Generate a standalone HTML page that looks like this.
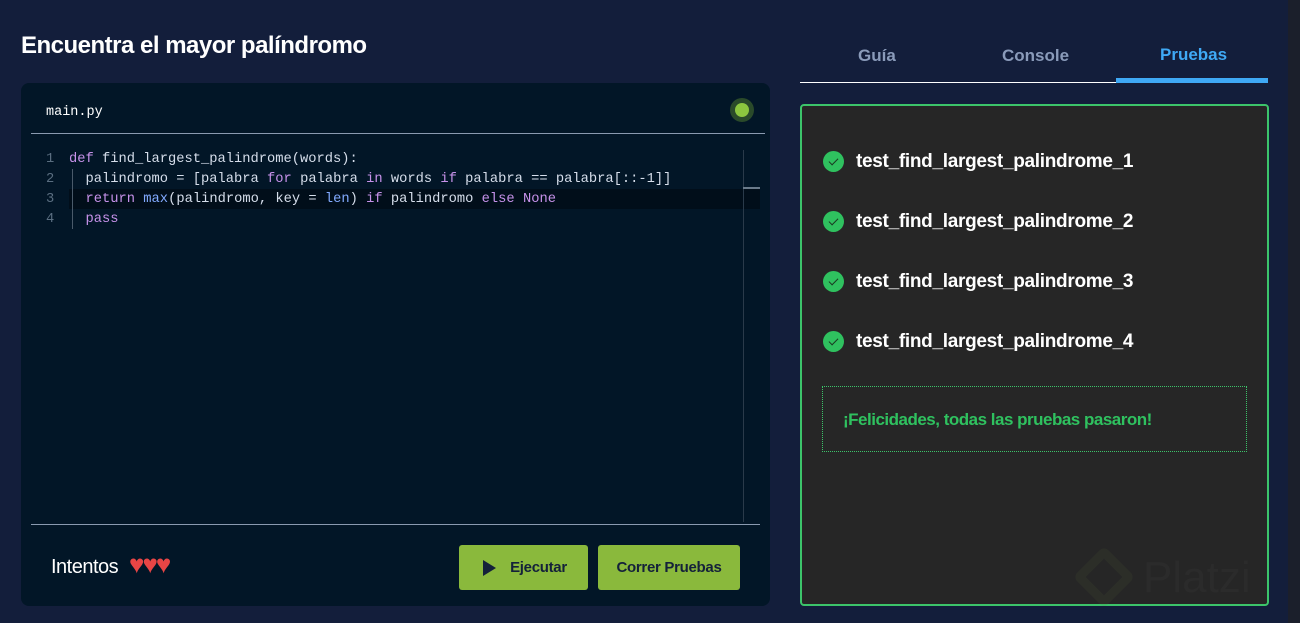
<!DOCTYPE html>
<html><head><meta charset="utf-8"><style>
*{margin:0;padding:0;box-sizing:border-box}
body{width:1300px;height:623px;background:#131e3b;font-family:"Liberation Sans",sans-serif;position:relative;overflow:hidden}
.abs{position:absolute}
h1{position:absolute;left:21px;top:32px;font-size:24px;color:#fff;font-weight:bold;letter-spacing:-0.5px}
.ed{left:21px;top:83px;width:749px;height:523px;background:#021627;border-radius:8px}
.code{font-family:"Liberation Mono",monospace;font-size:13.75px;color:#d6deeb;white-space:pre;line-height:20px}
.k{color:#c792ea}.f{color:#82aaff}
.btn{background:#8ab93c;border-radius:3px;color:#14213a;font-weight:bold;font-size:15px;display:flex;align-items:center;justify-content:center;letter-spacing:-0.3px}
.t{position:absolute;left:856px;color:#fff;font-weight:bold;font-size:19px;letter-spacing:-0.3px}
.ic{position:absolute;left:823px;width:21px;height:21px;border-radius:50%;background:#2fc15f}
.ic:after{content:"";position:absolute;left:8px;top:5px;width:4px;height:8px;border:solid #1a3a22;border-width:0 1.5px 1.5px 0;transform:rotate(45deg)}
</style></head><body>
<h1>Encuentra el mayor palíndromo</h1>
<div class="abs ed"></div>
<div class="abs" style="left:46px;top:105px;font-family:'Liberation Mono',monospace;font-size:13.5px;color:#fff">main.py</div>
<div class="abs" style="left:730px;top:98px;width:24px;height:24px;border-radius:50%;background:#2a4a2a"></div>
<div class="abs" style="left:735px;top:103px;width:14px;height:14px;border-radius:50%;background:#8cc63f"></div>
<div class="abs" style="left:31px;top:133px;width:734px;height:1px;background:#8a9ab0"></div>
<div class="abs" style="left:69px;top:189px;width:691px;height:20px;background:#010e1a"></div>
<div class="abs code" style="left:46px;top:150px;color:#5a6e80">1
2
3
4</div>
<div class="abs" style="left:72px;top:169px;width:1px;height:60px;background:#4a5a6a"></div>
<div class="abs code" style="left:69px;top:150px"><span class="k">def</span> find_largest_palindrome(words):
  palindromo = [palabra <span class="k">for</span> palabra <span class="k">in</span> words <span class="k">if</span> palabra == palabra[::-1]]
  <span class="k">return</span> <span class="f">max</span>(palindromo, key = <span class="f">len</span>) <span class="k">if</span> palindromo <span class="k">else</span> <span class="k">None</span>
  <span class="k">pass</span></div>
<div class="abs" style="left:743px;top:150px;width:1px;height:372px;background:#2a3a4a"></div>
<div class="abs" style="left:743px;top:187px;width:17px;height:2px;background:#6a7a8a"></div>
<div class="abs" style="left:31px;top:524px;width:729px;height:1px;background:#8a9ab0"></div>
<div class="abs" style="left:51px;top:556px;color:#fff;font-size:20px;letter-spacing:-0.5px">Intentos</div>
<div class="abs" style="left:129px;top:549px;color:#e84545;font-size:26px;letter-spacing:-2px">♥♥♥</div>
<div class="abs btn" style="left:459px;top:545px;width:129px;height:45px"><svg width="18" height="18" viewBox="0 0 18 18" style="margin-right:12px"><path d="M3 1 L16 9 L3 17Z" fill="#14213a"/></svg>Ejecutar</div>
<div class="abs btn" style="left:598px;top:545px;width:142px;height:45px">Correr Pruebas</div>
<div class="abs" style="left:858px;top:46px;color:#8a9bba;font-weight:bold;font-size:17px">Guía</div>
<div class="abs" style="left:1002px;top:46px;color:#8a9bba;font-weight:bold;font-size:17px">Console</div>
<div class="abs" style="left:1160px;top:45px;color:#3fa9f5;font-weight:bold;font-size:17px">Pruebas</div>
<div class="abs" style="left:800px;top:82px;width:468px;height:1px;background:#fff"></div>
<div class="abs" style="left:1116px;top:78px;width:152px;height:5px;background:#3fa9f5"></div>
<div class="abs" style="left:800px;top:104px;width:469px;height:502px;background:#262626;border:2px solid #3cc46a;border-radius:4px"></div>
<div class="ic" style="top:151px"></div><div class="t" style="top:151px">test_find_largest_palindrome_1</div>
<div class="ic" style="top:211px"></div><div class="t" style="top:211px">test_find_largest_palindrome_2</div>
<div class="ic" style="top:271px"></div><div class="t" style="top:271px">test_find_largest_palindrome_3</div>
<div class="ic" style="top:331px"></div><div class="t" style="top:331px">test_find_largest_palindrome_4</div>
<div class="abs" style="left:822px;top:386px;width:425px;height:66px;border:1px dotted #3cc46a"></div>
<div class="abs" style="left:843px;top:410px;color:#2fc15f;font-size:17px;font-weight:bold;letter-spacing:-0.5px">¡Felicidades, todas las pruebas pasaron!</div>
<div class="abs" style="left:1288px;top:0;width:12px;height:623px;background:#1b1f2b"></div>
<div class="abs" style="left:1082px;top:555px;width:44px;height:44px;border:9px solid rgba(90,110,60,.12);transform:rotate(45deg);border-radius:6px"></div>
<div class="abs" style="left:1143px;top:553px;font-size:44px;color:rgba(255,255,255,.025)">Platzi</div>
</body></html>
